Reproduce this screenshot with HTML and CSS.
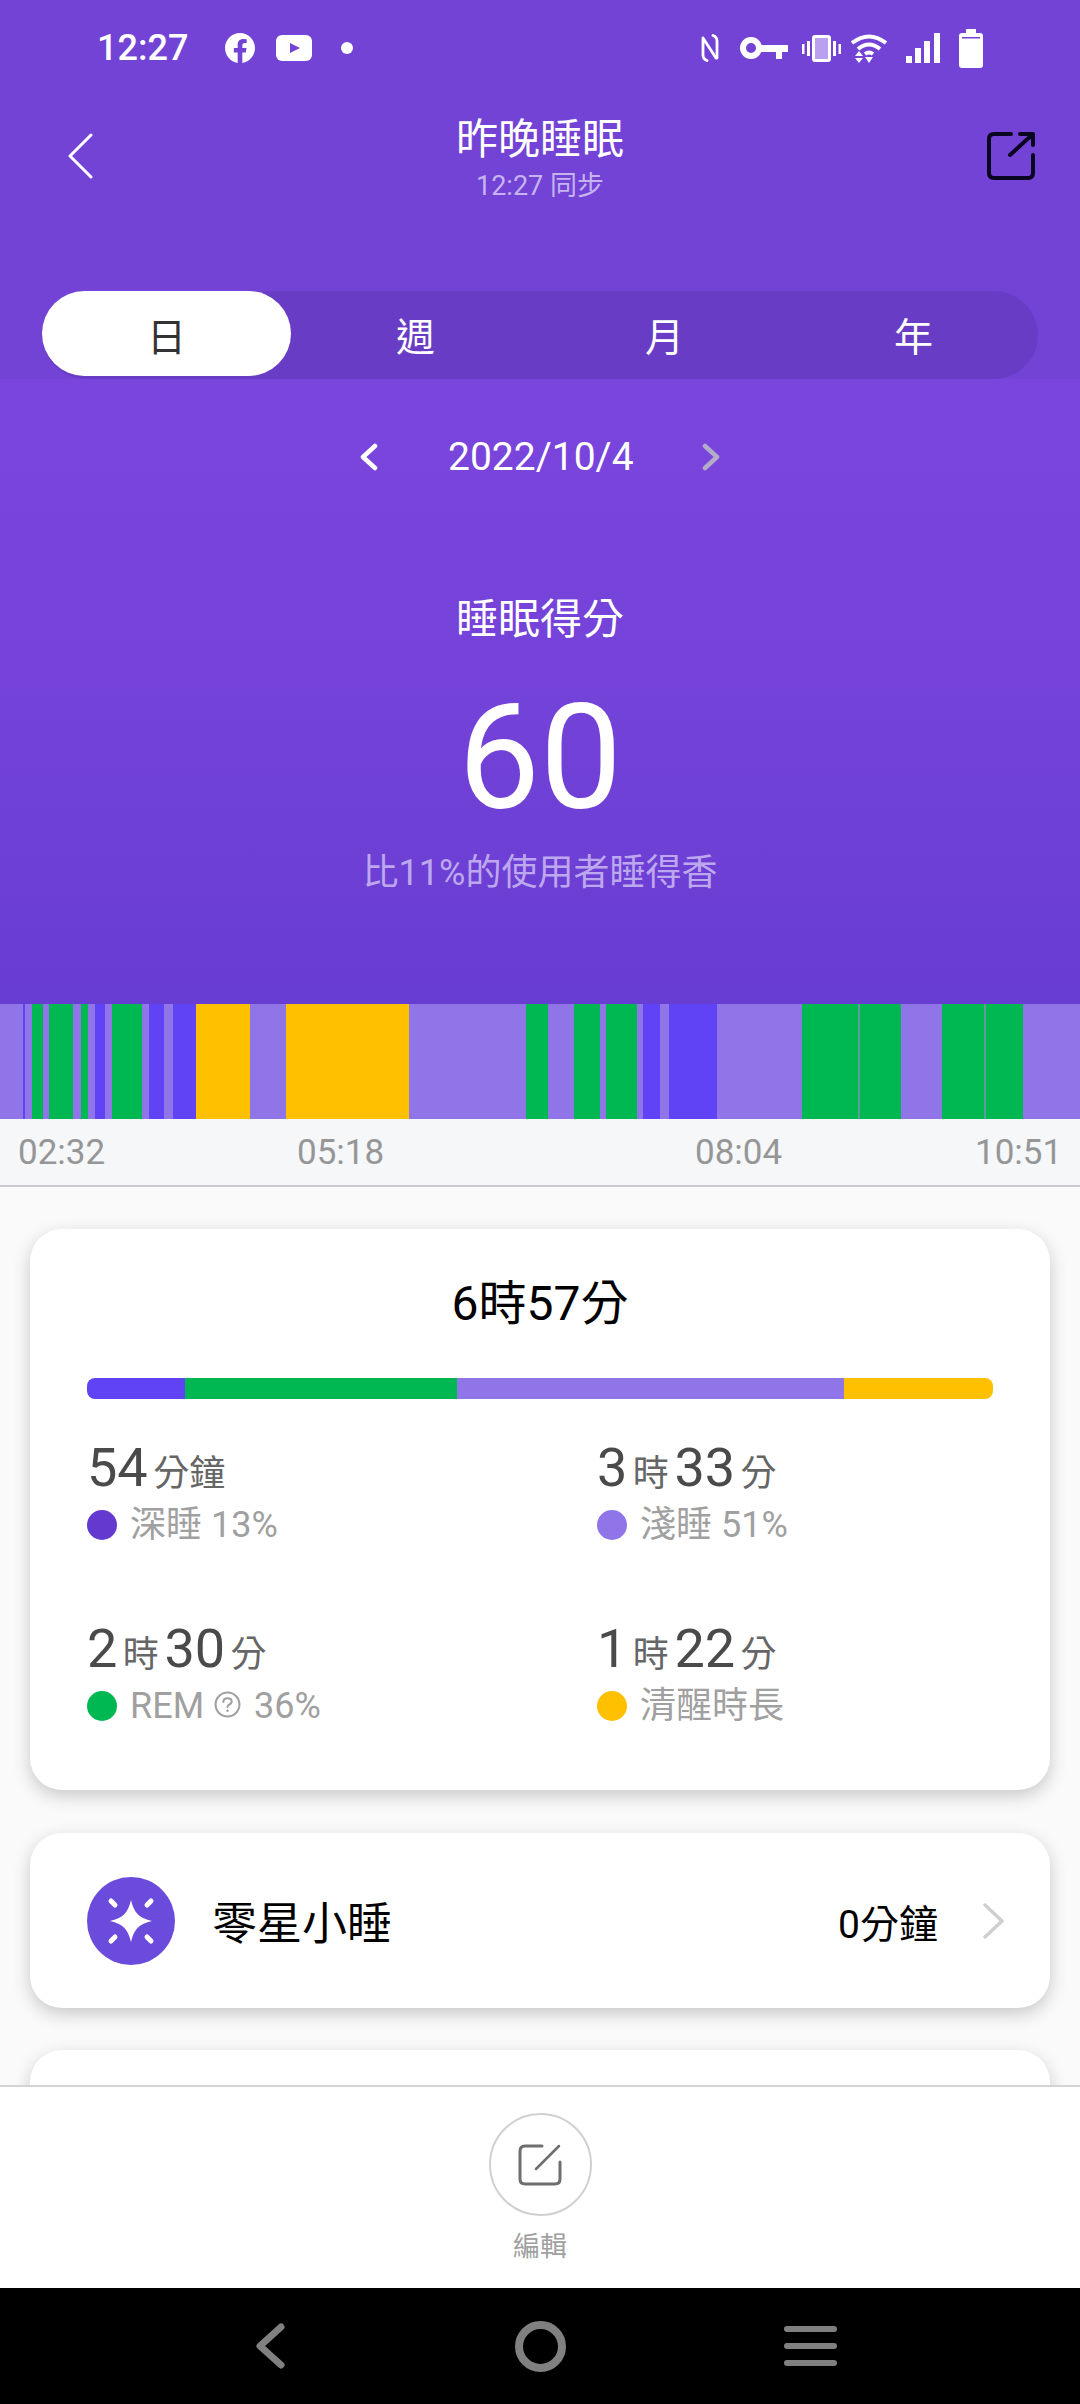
FILE: index.html
```html
<!DOCTYPE html>
<html lang="zh-Hant">
<head>
    <meta charset="UTF-8">
    <meta name="viewport" content="width=device-width, initial-scale=1.0">
    <title>昨晚睡眠</title>
    <link rel="stylesheet" href="styles.css">
</head>
<body>
<div class="phone">
    <section class="hero">
        <div class="hero-top">
            <div class="status-bar">
                <span class="clock">12:27</span>
                <svg class="ic-fb" viewBox="0 0 24 24"><path fill="#fff" d="M24 12.07C24 5.4 18.63 0 12 0S0 5.4 0 12.07c0 6.03 4.39 11.02 10.13 11.93v-8.44H7.08v-3.49h3.05V9.41c0-3.02 1.79-4.69 4.53-4.69 1.31 0 2.69.24 2.69.24v2.97h-1.52c-1.49 0-1.96.93-1.96 1.89v2.26h3.33l-.53 3.49h-2.8V24C19.61 23.09 24 18.1 24 12.07z"/></svg>
                <svg class="ic-yt" viewBox="0 0 36 26"><rect width="36" height="26" rx="6" fill="#fff"/><path d="M14 8l10 5-10 5z" fill="#7343d6"/></svg>
                <span class="status-dot"></span>
                <div class="status-right">
                    <svg class="ic-nfc" viewBox="0 0 18 28" fill="none" stroke="#fff" stroke-width="2.800" stroke-linecap="round" stroke-linejoin="round"><path d="M6 26.500Q2 25 2 21V4L15 24"/><path d="M12 1.500Q16 3 16 7V24"/></svg>
                    <svg class="ic-key" viewBox="0 0 48 22"><circle cx="11" cy="11" r="8" fill="none" stroke="#fff" stroke-width="6"/><path fill="#fff" d="M17 8h31v7h-6v7h-6v-7H17z"/></svg>
                    <svg class="ic-vib" viewBox="0 0 39 27"><rect x="11.500" y="1.500" width="16" height="24" rx="1.500" fill="#b9a1ef" stroke="#fff" stroke-width="3"/><rect y="9" width="2.500" height="10" fill="#fff"/><rect x="5" y="6" width="3" height="15" fill="#fff"/><rect x="31" y="6" width="3" height="15" fill="#fff"/><rect x="36.500" y="9" width="2.500" height="10" fill="#fff"/></svg>
                    <svg class="ic-wifi" viewBox="0 0 36 30" fill="none" stroke="#fff" stroke-width="4"><path d="M1 10Q18-3 35 10"/><path d="M7 16Q18 7 29 16"/><path d="M14 21Q18 18 22 21"/><path fill="#fff" stroke="none" d="M4 23h8l-4-5zM4 25h8l-4 5zM14 24h8l-4 6z"/></svg>
                    <svg class="ic-signal" viewBox="0 0 34 30" fill="#fff"><rect y="23" width="6" height="7"/><rect x="9" y="15" width="6" height="15"/><rect x="18" y="8" width="6" height="22"/><rect x="28" width="6" height="30"/></svg>
                    <svg class="ic-batt" viewBox="0 0 24 39"><path fill="#fff" d="M7 0h10v4h4q3 0 3 3v29q0 3-3 3H3q-3 0-3-3V7q0-3 3-3h4z"/><rect x="3" y="8" width="18" height="1.500" fill="#7343d6"/></svg>
                </div>
            </div>
            <div class="title-row">
                <svg class="ic-back" viewBox="0 0 25 46" fill="none" stroke="#fff" stroke-width="3" stroke-linecap="round" stroke-linejoin="round"><path d="M23 2L2 23l21 21"/></svg>
                <div class="title-block">
                    <div class="title">昨晚睡眠</div>
                    <div class="sync">12:27 同步</div>
                </div>
                <svg class="ic-share" viewBox="0 0 48 48" fill="none" stroke="#0a0520" stroke-width="4" stroke-linecap="round" stroke-linejoin="round"><path d="M24 2H7Q2 2 2 7v34q0 5 5 5h34q5 0 5-5V23"/><path d="M23 23L46 2M33 2h13v11"/></svg>
            </div>
            <div class="tabs">
                <div class="tab tab-active">日</div>
                <div class="tab">週</div>
                <div class="tab">月</div>
                <div class="tab">年</div>
            </div>
        </div>
        <div class="hero-score">
            <div class="date-row">
                <svg class="ic-chev" viewBox="0 0 18 28" fill="none" stroke="#fff" stroke-width="4.500" stroke-linecap="round" stroke-linejoin="round"><path d="M15 3L3 14l12 11"/></svg>
                <span class="date">2022/10/4</span>
                <svg class="ic-chev" viewBox="0 0 18 28" fill="none" stroke="#b3acc9" stroke-width="4.500" stroke-linecap="round" stroke-linejoin="round"><path d="M3 3l12 11L3 25"/></svg>
            </div>
            <div class="score-label">睡眠得分</div>
            <div class="score">60</div>
            <div class="score-note">比11%的使用者睡得香</div>
        </div>
    </section>

    <div class="hypno">
        <i class="light" style="width:23px"></i><i class="deep" style="width:2px"></i><i class="light" style="width:7px"></i><i class="rem" style="width:11px"></i><i class="light" style="width:6px"></i><i class="rem" style="width:24px"></i><i class="light" style="width:8px"></i><i class="rem" style="width:7px"></i><i class="light" style="width:7px"></i><i class="deep" style="width:10px"></i><i class="light" style="width:7px"></i><i class="rem" style="width:30px"></i><i class="light" style="width:7px"></i><i class="deep" style="width:15px"></i><i class="light" style="width:9px"></i><i class="deep" style="width:23px"></i><i class="awake" style="width:54px"></i><i class="light" style="width:36px"></i><i class="awake" style="width:123px"></i><i class="light" style="width:117px"></i><i class="rem" style="width:22px"></i><i class="light" style="width:26px"></i><i class="rem" style="width:26px"></i><i class="light" style="width:6px"></i><i class="rem" style="width:31px"></i><i class="light" style="width:6px"></i><i class="deep" style="width:17px"></i><i class="light" style="width:9px"></i><i class="deep" style="width:48px"></i><i class="light" style="width:85px"></i><i class="rem" style="width:56px"></i><i class="seam" style="width:2px"></i><i class="rem" style="width:41px"></i><i class="light" style="width:41px"></i><i class="rem" style="width:42px"></i><i class="seam" style="width:2px"></i><i class="rem" style="width:37px"></i><i class="light" style="width:57px"></i>
    </div>
    <div class="axis">
        <span>02:32</span><span>05:18</span><span>08:04</span><span>10:51</span>
    </div>

    <main class="content">
        <section class="card summary">
            <div class="total">6時57分</div>
            <div class="stage-bar">
                <i class="deep" style="width:98px"></i><i class="rem" style="width:272px"></i><i class="light" style="width:387px"></i><i class="awake" style="width:149px"></i>
            </div>
            <div class="stats">
                <div class="stat">
                    <div class="stat-value">54<small>分鐘</small></div>
                    <div class="stat-label"><span class="dot dot-deep"></span><span>深睡 13%</span></div>
                </div>
                <div class="stat">
                    <div class="stat-value">3<small>時</small>33<small>分</small></div>
                    <div class="stat-label"><span class="dot light"></span><span>淺睡 51%</span></div>
                </div>
                <div class="stat">
                    <div class="stat-value">2<small>時</small>30<small>分</small></div>
                    <div class="stat-label"><span class="dot rem"></span><span>REM</span>
                        <svg class="ic-help" viewBox="0 0 26 26" fill="none" stroke="#a0a0a0" stroke-width="2"><circle cx="13" cy="13" r="11.500"/><path stroke-linecap="round" d="M9 10.500q0-3.500 4-3.500t4 3.200q0 2-2.200 2.800-1.800.8-1.800 2.500"/><circle cx="13" cy="19" r="1.200" fill="#a0a0a0" stroke="none"/></svg>
                        <span>36%</span></div>
                </div>
                <div class="stat">
                    <div class="stat-value">1<small>時</small>22<small>分</small></div>
                    <div class="stat-label"><span class="dot awake"></span><span>清醒時長</span></div>
                </div>
            </div>
        </section>

        <section class="card nap">
            <svg class="ic-nap" viewBox="0 0 88 88">
                <circle cx="44" cy="44" r="44" fill="#6b4bdc"/>
                <path fill="#fff" d="M44 23C47 36 52 41 65 44 52 47 47 52 44 65 41 52 36 47 23 44 36 41 41 36 44 23Z"/>
                <path stroke="#fff" stroke-width="5" stroke-linecap="round" d="M24 24l4 4M64 24l-4 4M24 64l4-4M64 64l-4-4"/>
            </svg>
            <span class="nap-name">零星小睡</span>
            <span class="nap-time">0分鐘</span>
            <svg class="ic-more" viewBox="0 0 21 36" fill="none" stroke="#cfcfcf" stroke-width="3.500" stroke-linecap="round" stroke-linejoin="round"><path d="M2 2l17 16L2 34"/></svg>
        </section>

        <section class="card next"></section>
    </main>

    <div class="edit-bar">
        <div class="edit-btn">
            <svg class="ic-edit" viewBox="0 0 44 42" fill="none" stroke="#6e6e6e" stroke-width="3" stroke-linecap="round" stroke-linejoin="round"><path d="M24 2H7Q2 2 2 7v28q0 5 5 5h30q5 0 5-5V18"/><path d="M18 25L41 2" stroke-width="2.500"/></svg>
        </div>
        <div class="edit-label">編輯</div>
    </div>

    <nav class="sys-nav">
        <svg class="ic-nav-back" viewBox="0 0 30 46" fill="none" stroke="#808080" stroke-width="7" stroke-linecap="round" stroke-linejoin="round"><path d="M26 4L5 23l21 19"/></svg>
        <span class="nav-home"></span>
        <span class="nav-menu"><b></b><b></b><b></b></span>
    </nav>
</div>
</body>
</html>
```

FILE: styles.css
```css
/* styles.css */

* {
    box-sizing: border-box;
}

body {
    margin: 0;
    font-family: Roboto, "Noto Sans CJK TC", sans-serif;
    background-color: #fafafa;
}

.phone {
    width: 1080px;
    height: 2404px;
    display: flex;
    flex-direction: column;
    overflow: hidden;
}

svg {
    display: block;
    flex: none;
}

/* purple header */

.hero {
    height: 1004px;
    flex: none;
    color: #fff;
}

.hero-top {
    height: 379px;
    background-color: #7343d6;
}

.status-bar {
    height: 96px;
    display: flex;
    align-items: center;
    padding: 0 97px 0 97px;
}

.clock {
    font-size: 36px;
    font-weight: 500;
    width: 88px;
    margin-right: 40px;
    white-space: nowrap;
}

.ic-fb {
    width: 30px;
    height: 30px;
    margin-right: 21px;
}

.ic-yt {
    width: 36px;
    height: 26px;
    margin-right: 29px;
}

.status-dot {
    width: 12px;
    height: 12px;
    border-radius: 50%;
    background-color: #fff;
}

.status-right {
    margin-left: auto;
    display: flex;
    align-items: center;
}

.ic-nfc {
    width: 18px;
    height: 28px;
    margin-right: 21px;
}

.ic-key {
    width: 48px;
    height: 22px;
    margin-right: 14px;
}

.ic-vib {
    width: 39px;
    height: 27px;
    margin-right: 10px;
}

.ic-wifi {
    width: 36px;
    height: 30px;
    margin-right: 19px;
}

.ic-signal {
    width: 34px;
    height: 30px;
    margin-right: 19px;
}

.ic-batt {
    width: 24px;
    height: 39px;
}

.title-row {
    height: 120px;
    padding: 0 45px;
    display: grid;
    grid-template-columns: 1fr auto 1fr;
    align-items: center;
}

.ic-back {
    width: 25px;
    height: 46px;
    margin-left: 23px;
}

.title-block {
    height: 120px;
    padding-top: 19px;
    text-align: center;
}

.title {
    font-size: 42px;
    line-height: 50px;
}

.sync {
    font-size: 27px;
    line-height: 42px;
    color: #c6b4f0;
}

.ic-share {
    width: 48px;
    height: 48px;
    justify-self: end;
}

.tabs {
    margin: 75px 42px 0;
    height: 88px;
    display: grid;
    grid-template-columns: repeat(4, 1fr);
    background-color: #693cc6;
    border-radius: 44px;
}

.tab {
    height: 85px;
    display: flex;
    align-items: center;
    justify-content: center;
    font-size: 39px;
    border-radius: 43px;
}

.tab-active {
    background-color: #fff;
    color: #333;
}

.hero-score {
    height: 625px;
    text-align: center;
    background: linear-gradient(#7a45dc, #7543d9 45%, #683dd1);
}

.date-row {
    height: 60px;
    padding-top: 48px;
    box-sizing: content-box;
    display: flex;
    align-items: center;
    justify-content: center;
    gap: 70px;
}

.date {
    font-size: 39px;
    width: 184px;
    white-space: nowrap;
}

.ic-chev {
    width: 18px;
    height: 28px;
}

.score-label {
    margin-top: 103px;
    font-size: 42px;
    line-height: 60px;
}

.score {
    margin-top: 24px;
    font-size: 146px;
    line-height: 170px;
}

.score-note {
    margin-top: 4px;
    font-size: 36px;
    line-height: 50px;
    color: #bda8ef;
}

/* sleep stages */

.hypno {
    height: 115px;
    flex: none;
    display: flex;
}

.hypno i,
.stage-bar i {
    display: block;
    flex: none;
}

.deep {
    background-color: #5f43f5;
}

.rem {
    background-color: #00b852;
}

.light {
    background-color: #9075e8;
}

.awake {
    background-color: #ffc000;
}

.seam {
    background-color: #5f9c9c;
}

.axis {
    height: 68px;
    flex: none;
    padding-left: 18px;
    display: grid;
    grid-template-columns: 279px 398px 280px auto;
    align-items: center;
    font-size: 35px;
    color: #969696;
    background-color: #f5f7f9;
    border-bottom: 2px solid #cbcbcf;
}

.content {
    flex: 1;
    min-height: 0;
    overflow: hidden;
    padding: 42px 30px 0;
}

.card {
    background-color: #fff;
    border-radius: 32px;
    box-shadow: 0 6px 18px rgba(0, 0, 0, 0.2);
}

.summary {
    height: 561px;
    padding: 45px 57px 0;
}

.total {
    height: 60px;
    font-size: 48px;
    line-height: 60px;
    text-align: center;
    color: #000;
}

.stage-bar {
    margin-top: 44px;
    height: 21px;
    display: flex;
    border-radius: 8px;
    overflow: hidden;
}

.stats {
    margin-top: 39px;
    display: grid;
    grid-template-columns: 510px 1fr;
    row-gap: 72px;
}

.stat-value {
    height: 60px;
    font-size: 54px;
    line-height: 60px;
    color: #4a4a4a;
    white-space: nowrap;
}

.stat-value small {
    font-size: 36px;
    margin: 0 5.500px;
    color: #666;
}

.stat-label {
    margin-top: 5px;
    height: 44px;
    display: flex;
    align-items: center;
    font-size: 36px;
    line-height: 44px;
    color: #a0a0a0;
    white-space: nowrap;
}

.dot {
    width: 30px;
    height: 30px;
    border-radius: 50%;
    margin-right: 13px;
    flex: none;
}

.dot-deep {
    background-color: #6339cf;
}

.ic-help {
    width: 27px;
    height: 27px;
    margin: -4px 13px 0 10px;
}

.nap {
    margin-top: 43px;
    height: 175px;
    padding: 0 46px 0 57px;
    display: flex;
    align-items: center;
}

.ic-nap {
    width: 88px;
    height: 88px;
    margin-right: 37px;
}

.nap-name {
    font-size: 45px;
    color: #000;
}

.nap-time {
    margin-left: auto;
    margin-right: 45px;
    font-size: 39px;
    color: #000;
}

.ic-more {
    width: 21px;
    height: 36px;
}

.next {
    margin-top: 42px;
    height: 200px;
}

/* bottom */

.edit-bar {
    height: 203px;
    flex: none;
    display: flex;
    flex-direction: column;
    align-items: center;
    padding-top: 26px;
    background-color: #fff;
    border-top: 2px solid #d4d4d4;
}

.edit-btn {
    width: 103px;
    height: 103px;
    border: 2px solid #d0d0d0;
    border-radius: 50%;
    display: flex;
    align-items: center;
    justify-content: center;
}

.ic-edit {
    width: 44px;
    height: 42px;
}

.edit-label {
    margin-top: 13px;
    font-size: 27px;
    line-height: 36px;
    color: #a0a0a0;
}

.sys-nav {
    height: 116px;
    flex: none;
    background-color: #000;
    display: grid;
    grid-template-columns: 255px 30px 230px 51px 218px 53px;
    align-items: center;
}

.ic-nav-back {
    grid-column: 2;
    width: 30px;
    height: 46px;
}

.nav-home {
    grid-column: 4;
    width: 51px;
    height: 51px;
    border: 8px solid #808080;
    border-radius: 50%;
}

.nav-menu {
    grid-column: 6;
    display: flex;
    flex-direction: column;
    gap: 11px;
}

.nav-menu b {
    display: block;
    height: 6px;
    border-radius: 3px;
    background-color: #808080;
}
```
